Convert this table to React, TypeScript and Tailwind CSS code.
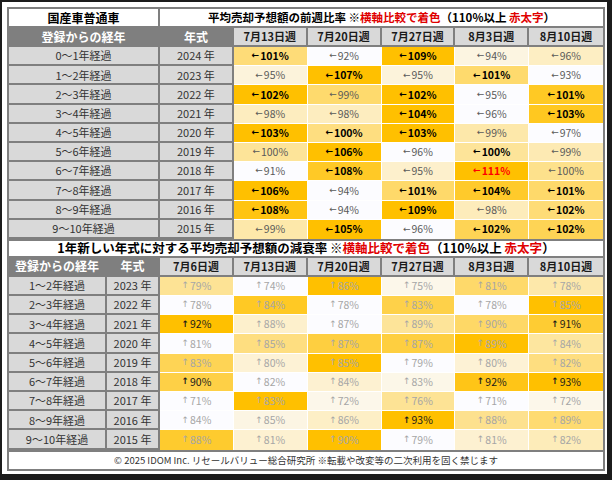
type Cell = [number, number]; // value, style: 0 normal, 1 bold, 2 red bold

const topWeeks = ['7月13日週', '7月20日週', '7月27日週', '8月3日週', '8月10日週'];
const bottomWeeks = ['7月6日週', ...topWeeks];

const topRows: [string, string, Cell[]][] = [
  ['0～1年経過', '2024', [[101, 1], [92, 0], [109, 1], [94, 0], [96, 0]]],
  ['1～2年経過', '2023', [[95, 0], [107, 1], [95, 0], [101, 1], [93, 0]]],
  ['2～3年経過', '2022', [[102, 1], [99, 0], [102, 1], [95, 0], [101, 1]]],
  ['3～4年経過', '2021', [[98, 0], [98, 0], [104, 1], [96, 0], [103, 1]]],
  ['4～5年経過', '2020', [[103, 1], [100, 1], [103, 1], [99, 0], [97, 0]]],
  ['5～6年経過', '2019', [[100, 0], [106, 1], [96, 0], [100, 1], [99, 0]]],
  ['6～7年経過', '2018', [[91, 0], [108, 1], [95, 0], [111, 2], [100, 0]]],
  ['7～8年経過', '2017', [[106, 1], [94, 0], [101, 1], [104, 1], [101, 1]]],
  ['8～9年経過', '2016', [[108, 1], [94, 0], [109, 1], [98, 0], [102, 1]]],
  ['9～10年経過', '2015', [[99, 0], [105, 1], [96, 0], [102, 1], [102, 1]]],
];

const bottomRows: [string, string, Cell[]][] = [
  ['1～2年経過', '2023', [[79, 0], [74, 0], [86, 0], [75, 0], [81, 0], [78, 0]]],
  ['2～3年経過', '2022', [[78, 0], [84, 0], [78, 0], [83, 0], [78, 0], [85, 0]]],
  ['3～4年経過', '2021', [[92, 1], [88, 0], [87, 0], [89, 0], [90, 0], [91, 1]]],
  ['4～5年経過', '2020', [[81, 0], [85, 0], [87, 0], [87, 0], [89, 0], [84, 0]]],
  ['5～6年経過', '2019', [[83, 0], [80, 0], [85, 0], [79, 0], [80, 0], [82, 0]]],
  ['6～7年経過', '2018', [[90, 1], [82, 0], [84, 0], [83, 0], [92, 1], [93, 1]]],
  ['7～8年経過', '2017', [[71, 0], [83, 0], [72, 0], [76, 0], [71, 0], [72, 0]]],
  ['8～9年経過', '2016', [[84, 0], [85, 0], [86, 0], [93, 1], [88, 0], [89, 0]]],
  ['9～10年経過', '2015', [[88, 0], [81, 0], [90, 0], [79, 0], [81, 0], [82, 0]]],
];

// row-wise colour scale, white -> gold
function heat(v: number, cells: Cell[]) {
  const vals = cells.map((c) => c[0]);
  const min = Math.min(...vals);
  const max = Math.max(...vals);
  const t = max === min ? 0 : (v - min) / (max - min);
  const r = Math.round(252 + 3 * t);
  const g = Math.round(252 - 60 * t);
  const b = Math.round(255 - 255 * t);
  return `rgb(${r},${g},${b})`;
}

function Title({ main, size }: { main: string; size: string }) {
  return (
    <span className={`${size} font-bold text-black`}>
      {main} ※<span className="text-[#e00000]">横軸比較で着色</span>
      （110%以上 <span className="text-[#e00000]">赤太字</span>）
    </span>
  );
}

const label = 'h-[19.2px] flex items-center justify-center bg-[#d9d9d9] border-r-2 border-b-2 border-[#7f7f7f] text-[11px] text-[#333]';
const headGray = 'h-[19px] flex items-center justify-center bg-[#7f7f7f] border-b-2 border-r-2 border-[#7f7f7f] text-[12px] font-bold text-white';
const headWeek = 'h-[19px] flex items-center justify-center bg-[#d9d9d9] border-b-2 border-[#7f7f7f] text-[11px] font-bold text-[#1a1a1a]';

export default function App() {
  return (
    <div className="w-[612px] h-[480px] bg-white border-t-2 border-l-2 border-r-[5px] border-b-[6px] border-[#1c1c1c] pt-[5px] pl-[5px] pr-[2px] font-['Noto_Sans_CJK_JP',sans-serif]">
      <div className="border-2 border-[#7f7f7f]">
        {/* 前週比率 */}
        <div className="grid grid-cols-[151px_repeat(6,1fr)]">
          <div className="h-[19px] flex items-center justify-center border-r-2 border-b-2 border-[#7f7f7f] text-[12px] font-bold text-black">
            国産車普通車
          </div>
          <div className="col-span-6 h-[19px] flex items-center justify-center border-b-2 border-[#7f7f7f]">
            <Title main="平均売却予想額の前週比率" size="text-[11.5px]" />
          </div>

          <div className={headGray}>登録からの経年</div>
          <div className={headGray}>年式</div>
          {topWeeks.map((w, i) => (
            <div key={w} className={`${headWeek} ${i < 4 ? 'border-r-2' : ''}`}>
              {w}
            </div>
          ))}

          {topRows.map(([age, year, cells], r) => (
            <div key={age} className="contents">
              <div className={label}>{age}</div>
              <div className={label}>{year} 年</div>
              {cells.map(([v, s], i) => (
                <div
                  key={i}
                  className={`h-[19.2px] flex items-center justify-center border-white text-[10.5px] ${i < 4 ? 'border-r' : ''} ${r < 9 ? 'border-b' : ''} ${
                    s === 2 ? 'font-bold text-[#ff0000]' : s === 1 ? 'font-bold text-black' : 'text-[#595959]'
                  }`}
                  style={{ backgroundColor: heat(v, cells) }}
                >
                  <span className="font-['DejaVu_Sans',sans-serif] text-[9px] mr-[1px]">←</span>
                  {v}%
                </div>
              ))}
            </div>
          ))}
        </div>

        {/* 減衰率 */}
        <div className="grid grid-cols-[98px_53px_repeat(6,1fr)]">
          <div className="col-span-8 h-[19px] flex items-center justify-center border-t-2 border-b-2 border-[#7f7f7f]">
            <Title main="1年新しい年式に対する平均売却予想額の減衰率" size="text-[12.5px]" />
          </div>

          <div className={headGray}>登録からの経年</div>
          <div className={headGray}>年式</div>
          {bottomWeeks.map((w, i) => (
            <div key={w} className={`${headWeek} ${i < 5 ? 'border-r-2' : ''}`}>
              {w}
            </div>
          ))}

          {bottomRows.map(([age, year, cells], r) => (
            <div key={age} className="contents">
              <div className={label}>{age}</div>
              <div className={label}>{year} 年</div>
              {cells.map(([v, s], i) => (
                <div
                  key={i}
                  className={`h-[19.2px] flex items-center justify-center border-white text-[10.5px] ${i < 5 ? 'border-r' : ''} ${r < 8 ? 'border-b' : ''} ${
                    s === 1 ? 'text-[#1a1a1a]' : 'text-[#a6a6a6]'
                  }`}
                  style={{ backgroundColor: heat(v, cells) }}
                >
                  <span className={`font-['DejaVu_Sans',sans-serif] text-[9px] mr-[1px] ${s === 1 ? 'font-bold' : ''}`}>↑</span>
                  {v}%
                </div>
              ))}
            </div>
          ))}
        </div>

        <div className="h-[19px] flex items-center justify-center border-t-2 border-[#7f7f7f] text-[9.5px] text-[#333]">
          © 2025 IDOM Inc. リセールバリュー総合研究所 ※転載や改変等の二次利用を固く禁じます
        </div>
      </div>
    </div>
  );
}
